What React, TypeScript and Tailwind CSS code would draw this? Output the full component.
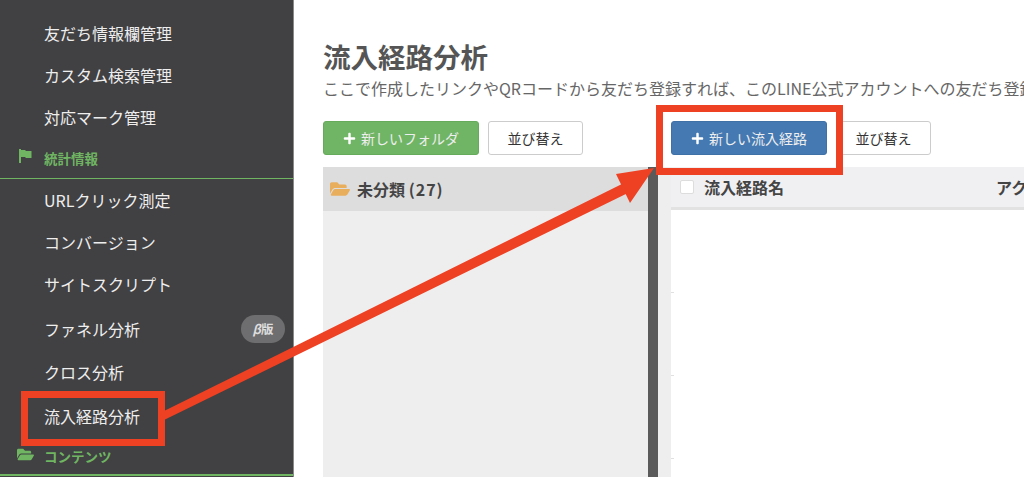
import { FaFolderOpen, FaPlus } from "react-icons/fa";

function NavItem({ label, className = "h-[42px]" }: { label: string; className?: string }) {
  return (
    <div className={`flex items-center pl-[44px] pb-[2px] text-[16px] text-[#eeeeee] ${className}`}>
      {label}
    </div>
  );
}

function Flag() {
  return (
    <svg width="13" height="14" viewBox="0 0 13 14" className="ml-[19px] mr-[12px] -mt-[6px]">
      <path d="M0 0h2v14H0z M2 1h4l1 1h5.500v7H7L6 8H2z" fill="#6fb562" />
    </svg>
  );
}

function Sidebar() {
  return (
    <aside className="w-[294px] h-full shrink-0 bg-[#414042] border-r border-[#8a8a8a] pt-[13px]">
      <NavItem label="友だち情報欄管理" />
      <NavItem label="カスタム検索管理" />
      <NavItem label="対応マーク管理" />
      <div className="h-[40px] flex items-center border-b border-[#6fb562] text-[13.500px] font-bold text-[#6fb562]">
        <Flag />
        統計情報
      </div>
      <div className="h-px" />
      <NavItem label="URLクリック測定" />
      <NavItem label="コンバージョン" />
      <NavItem label="サイトスクリプト" />
      <div className="h-[46px] flex items-center justify-between pl-[44px] pr-[8px] text-[16px] text-[#eeeeee]">
        ファネル分析
        <span className="w-[44px] h-[28px] rounded-full bg-[#6e6e70] flex items-center justify-center text-[12.500px] font-bold text-[#dddddd]">
          <span className="italic">β</span>版
        </span>
      </div>
      <NavItem label="クロス分析" />
      <NavItem label="流入経路分析" className="h-[46px]" />
      <div className="h-[36px] flex items-center pb-[2px] border-b-2 border-[#6fb562] text-[13.500px] font-bold text-[#6fb562]">
        <FaFolderOpen className="ml-[17px] mr-[10px] text-[17px] -mt-[3px]" />
        コンテンツ
      </div>
    </aside>
  );
}

function SortButton() {
  return (
    <button className="h-[34px] w-[95px] rounded-[3px] border border-[#cccccc] bg-white text-[14px] text-[#333333]">
      並び替え
    </button>
  );
}

function NewButton({ label, className }: { label: string; className: string }) {
  return (
    <button className={`h-[34px] w-[156px] rounded-[3px] border flex items-center justify-center gap-[5px] text-[14px] text-[#eeeeee] ${className}`}>
      <FaPlus className="text-[13px] text-white" />
      {label}
    </button>
  );
}

function Main() {
  return (
    <main className="flex-1 min-w-0 h-full overflow-hidden pl-[29px] pt-[36px]">
      <h1 className="text-[27.500px] leading-[40px] font-bold text-[#555555] whitespace-nowrap">流入経路分析</h1>
      <p className="text-[16px] leading-[22px] mt-[1px] text-[#666666] whitespace-nowrap">
        ここで作成したリンクやQRコードから友だち登録すれば、このLINE公式アカウントへの友だち登録経路を分析できます。
      </p>
      <div className="flex mt-[22px]">
        <div className="w-[348px] flex gap-[9px]">
          <NewButton label="新しいフォルダ" className="bg-[#70b565] border-[#66ab5b]" />
          <SortButton />
        </div>
        <div className="flex gap-[9px]">
          <NewButton label="新しい流入経路" className="bg-[#4579b2] border-[#3f70a6]" />
          <SortButton />
        </div>
      </div>
      <div className="flex mt-[12px] h-[310px]">
        <div className="w-[325px] bg-[#eeeeee]">
          <div className="h-[44px] bg-[#dddddd] flex items-center pl-[7px] gap-[7px] text-[16px] font-bold text-[#444444]">
            <FaFolderOpen className="text-[20px] text-[#e9ae5c]" />
            <span>
              未分類 <span className="tracking-[1px]">(27)</span>
            </span>
          </div>
        </div>
        <div className="w-[10px] bg-[#5a5a5a]" />
        <div className="w-[13px] bg-[#eeeeee]" />
        <div className="flex-1 min-w-0 overflow-hidden">
          <div className="h-[43px] bg-[#f0f0f2] border-b-[3px] border-[#e2e2e2] flex items-center text-[16px] font-bold text-[#444444] whitespace-nowrap">
            <span className="w-[14px] h-[14px] shrink-0 ml-[9px] mr-[10px] rounded-[2px] bg-white border border-[#dddddd]" />
            <span className="w-[292px] shrink-0">流入経路名</span>
            <span>アクション</span>
          </div>
          {[0, 1, 2].map((row) => (
            <div key={row} className="h-[83px] flex items-end">
              <span className="w-[3px] h-px bg-[#e0e0e0]" />
            </div>
          ))}
        </div>
      </div>
    </main>
  );
}

function Annotations() {
  return (
    <>
      <div className="absolute left-[21px] top-[391px] w-[144px] h-[55px] border-[7px] border-[#ee4023]" />
      <div className="absolute left-[656px] top-[105px] w-[187px] h-[70px] border-[7px] border-[#ee4023]" />
      <svg className="absolute left-0 top-0" width="1024" height="477">
        <path d="M164 420 L632 191 L628 181 L164 411 Z" fill="#ee4023" />
        <path d="M616 174 L654 168 L630 203 Z" fill="#ee4023" />
      </svg>
    </>
  );
}

export default function App() {
  return (
    <div className="relative w-[1024px] h-[477px] overflow-hidden flex bg-white font-['Noto_Sans_CJK_JP','Noto_Sans',sans-serif]">
      <Sidebar />
      <Main />
      <Annotations />
    </div>
  );
}
